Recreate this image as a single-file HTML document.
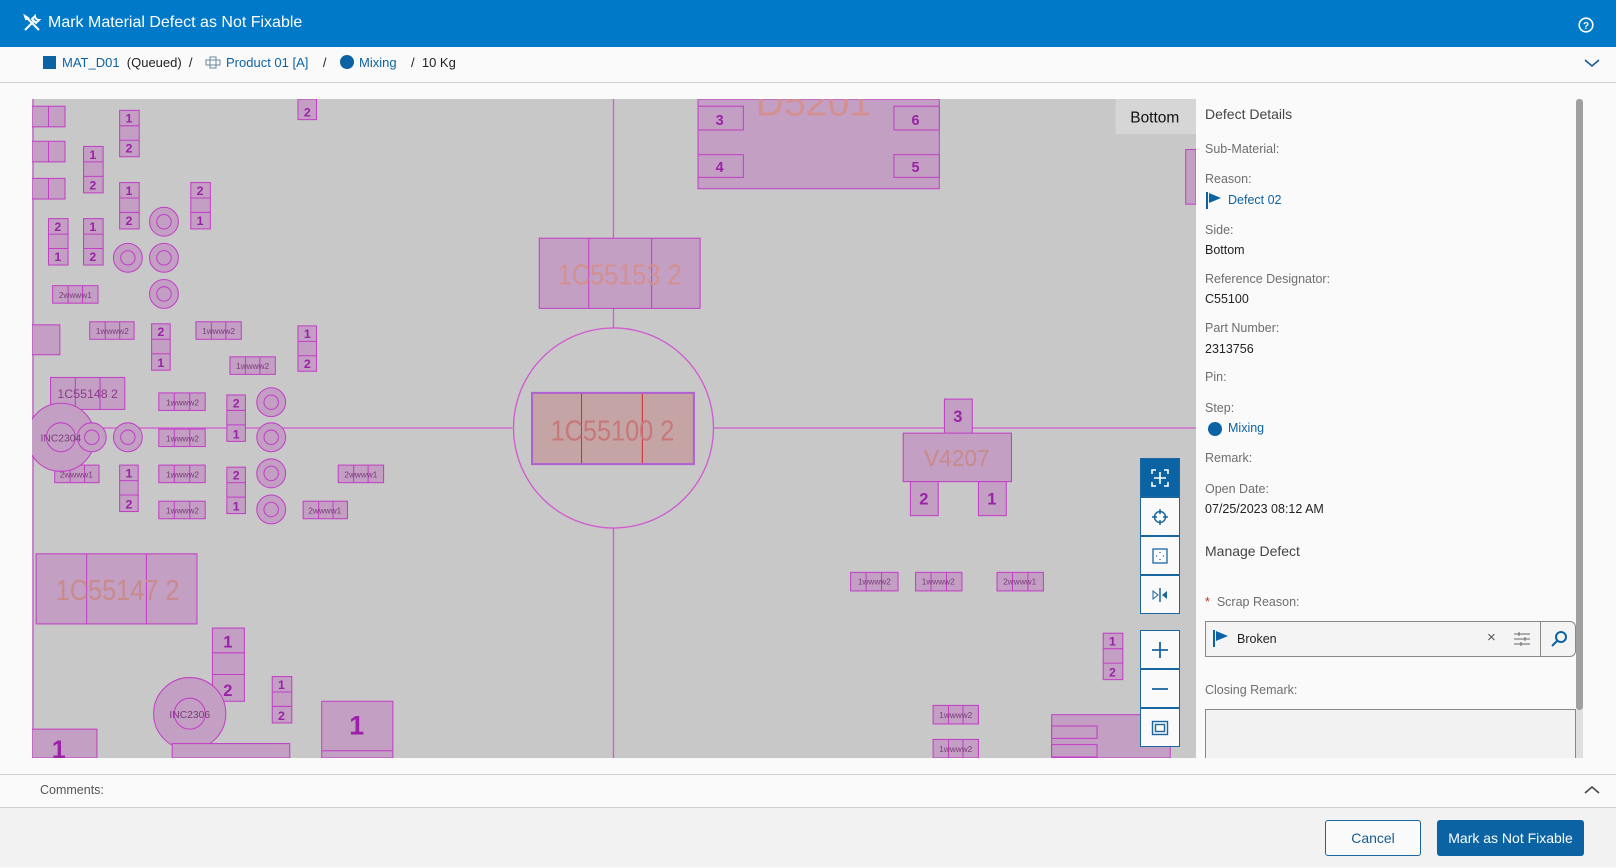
<!DOCTYPE html>
<html><head><meta charset="utf-8"><style>
*{box-sizing:border-box;margin:0;padding:0}
body{width:1616px;height:867px;overflow:hidden;background:#fafafa;font-family:"Liberation Sans",sans-serif;color:#222;position:relative}
.hdr{position:absolute;left:0;top:0;width:1616px;height:47px;background:#0079c8;color:#fff;font-size:16px}
.crumb{position:absolute;top:47px;left:0;width:1616px;height:36px;border-bottom:1px solid #d0d0d0;font-size:13px}
.abs{position:absolute}
.lbl{position:absolute;left:1205px;font-size:12.5px;color:#6e6e6e}
.val{position:absolute;left:1205px;font-size:12.5px;color:#222}
.tb{position:absolute;left:1140px;width:40px;height:39px;background:#fafafa;border:1.5px solid #1a66a0;display:flex;align-items:center;justify-content:center}
.c rect,.c circle{fill:#c39fc3;stroke:#c23fc6;stroke-width:1}
.c line{stroke:#c23fc6;stroke-width:1}
.n{fill:#9b22a8;font-weight:bold;font-family:"Liberation Sans",sans-serif}
.s{fill:#7a3a7a;font-size:5px;font-family:"Liberation Sans",sans-serif}
</style></head><body>
<div class="hdr">
<svg class="abs" style="left:23px;top:14px" width="18" height="18" viewBox="0 0 18 18" fill="none" stroke="#fff" stroke-width="2"><path d="M2 16 L11 7 M12 2a4 4 0 0 0 4 4l-3 3-4-4z" /><path d="M2 2 L16 16 M2 2l1 3 2-1z"/></svg>
<div class="abs" style="left:48px;top:14px">Mark Material Defect as Not Fixable</div>
<svg class="abs" style="left:1578px;top:17px" width="16" height="16" viewBox="0 0 16 16"><circle cx="8" cy="8" r="6.8" fill="none" stroke="#fff" stroke-width="1.6"/><text x="8" y="12" text-anchor="middle" fill="#fff" font-size="10" font-weight="bold" font-family="Liberation Sans">?</text></svg>
</div>
<div class="crumb">
<div class="abs" style="left:43px;top:9px;width:13px;height:13px;background:#0c63a4"></div>
<div class="abs" style="left:62px;top:8px;color:#0c63a4">MAT_D01 <span style="color:#222">&nbsp;(Queued) &nbsp;/</span></div>
<svg class="abs" style="left:205px;top:9px" width="16" height="13" viewBox="0 0 16 13" fill="none" stroke="#6a8aa0"><rect x="1" y="4" width="14" height="5"/><rect x="5" y="1" width="6" height="11"/></svg>
<div class="abs" style="left:226px;top:8px;color:#0c63a4">Product 01 [A] <span style="color:#222">&nbsp;&nbsp;&nbsp;/</span></div>
<div class="abs" style="left:340px;top:8px;width:14px;height:14px;border-radius:50%;background:#0c63a4"></div>
<div class="abs" style="left:359px;top:8px;color:#0c63a4">Mixing <span style="color:#222">&nbsp;&nbsp;&nbsp;/&nbsp; 10 Kg</span></div>
<svg class="abs" style="left:1584px;top:11px" width="16" height="10" viewBox="0 0 16 10"><path d="M1 2l7 6 7-6" fill="none" stroke="#1a5a90" stroke-width="1.6"/></svg>
</div>

<svg class="abs" style="left:32px;top:99px" width="1164" height="659" viewBox="32 96 1129 639" preserveAspectRatio="none">
<rect x="32" y="96" width="1129" height="639" fill="#c8c8c8"/>
<g stroke="#d05cd0" stroke-width="1.3" fill="none">
<line x1="596" y1="96" x2="596" y2="318"/><line x1="596" y1="512" x2="596" y2="735"/>
<line x1="32" y1="415" x2="498" y2="415"/><line x1="693" y1="415" x2="1161" y2="415"/>
<circle cx="596" cy="415" r="97"/>
<line x1="33" y1="96" x2="33" y2="735"/>
</g>
<g class="c">
<rect x="678" y="96" width="234" height="87"/>
<text x="790" y="112" text-anchor="middle" font-size="38" fill="#d49090" font-family="Liberation Sans">D5201</text>
<rect x="678" y="103" width="44" height="23"/><rect x="678" y="150" width="44" height="22"/><rect x="868" y="103" width="44" height="23"/><rect x="868" y="150" width="44" height="22"/>
<text class="n" x="699" y="121" font-size="14" text-anchor="middle">3</text><text class="n" x="699" y="167" font-size="14" text-anchor="middle">4</text><text class="n" x="889" y="121" font-size="14" text-anchor="middle">6</text><text class="n" x="889" y="167" font-size="14" text-anchor="middle">5</text>

<rect x="524" y="231" width="156" height="68"/><line x1="572" y1="231" x2="572" y2="299"/><line x1="633" y1="231" x2="633" y2="299"/>
<text x="602" y="276" text-anchor="middle" font-size="28" fill="#d49090" font-family="Liberation Sans" textLength="120" lengthAdjust="spacingAndGlyphs">1C55153 2</text>

<rect x="517" y="381" width="157" height="69" style="fill:#c4a4a4;stroke:#b060d0;stroke-width:2"/><line x1="565" y1="382" x2="565" y2="449" style="stroke:#d03030"/><line x1="624" y1="382" x2="624" y2="449" style="stroke:#d03030"/>
<text x="595" y="427" text-anchor="middle" font-size="28" fill="#c87878" font-family="Liberation Sans" textLength="120" lengthAdjust="spacingAndGlyphs">1C55100 2</text>

<rect x="917" y="387" width="27" height="34"/><text class="n" x="930" y="409" font-size="16" text-anchor="middle">3</text>
<rect x="877" y="420" width="105" height="47"/><text x="929" y="452" font-size="22" fill="#c88a8a" text-anchor="middle" font-family="Liberation Sans">V4207</text>
<rect x="884" y="467" width="27" height="33"/><text class="n" x="897" y="489" font-size="16" text-anchor="middle">2</text>
<rect x="950" y="467" width="27" height="33"/><text class="n" x="963" y="489" font-size="16" text-anchor="middle">1</text>

<rect x="36" y="537" width="156" height="68"/><line x1="85" y1="537" x2="85" y2="605"/><line x1="143" y1="537" x2="143" y2="605"/>
<text x="115" y="582" text-anchor="middle" font-size="28" fill="#c88a8a" font-family="Liberation Sans" textLength="120" lengthAdjust="spacingAndGlyphs">1C55147 2</text>

<rect x="50" y="366" width="72" height="31"/><line x1="74" y1="366" x2="74" y2="397"/><line x1="98" y1="366" x2="98" y2="397"/><text x="86" y="386" font-size="12" fill="#8a3a8a" text-anchor="middle" font-family="Liberation Sans">1C55148 2</text>

<!-- small horizontals -->
<g>
<rect x="32" y="103" width="32" height="20"/><line x1="48" y1="103" x2="48" y2="123"/>
<rect x="32" y="137" width="32" height="20"/><line x1="48" y1="137" x2="48" y2="157"/>
<rect x="32" y="173" width="32" height="20"/><line x1="48" y1="173" x2="48" y2="193"/>
<rect x="52" y="277" width="44" height="17"/><line x1="67" y1="277" x2="67" y2="294"/><line x1="81" y1="277" x2="81" y2="294"/>
<rect x="88" y="312" width="43" height="17"/><line x1="103" y1="312" x2="103" y2="329"/><line x1="117" y1="312" x2="117" y2="329"/>
<rect x="191" y="312" width="44" height="17"/><line x1="206" y1="312" x2="206" y2="329"/><line x1="220" y1="312" x2="220" y2="329"/>
<rect x="224" y="346" width="44" height="17"/><line x1="239" y1="346" x2="239" y2="363"/><line x1="253" y1="346" x2="253" y2="363"/>
<rect x="155" y="381" width="45" height="17"/><line x1="170" y1="381" x2="170" y2="398"/><line x1="185" y1="381" x2="185" y2="398"/>
<rect x="155" y="416" width="45" height="17"/><line x1="170" y1="416" x2="170" y2="433"/><line x1="185" y1="416" x2="185" y2="433"/>
<rect x="155" y="451" width="45" height="17"/><line x1="170" y1="451" x2="170" y2="468"/><line x1="185" y1="451" x2="185" y2="468"/>
<rect x="155" y="486" width="45" height="17"/><line x1="170" y1="486" x2="170" y2="503"/><line x1="185" y1="486" x2="185" y2="503"/>
<rect x="295" y="486" width="43" height="17"/><line x1="310" y1="486" x2="310" y2="503"/><line x1="324" y1="486" x2="324" y2="503"/>
<rect x="329" y="451" width="44" height="17"/><line x1="344" y1="451" x2="344" y2="468"/><line x1="358" y1="451" x2="358" y2="468"/>
<rect x="54" y="451" width="43" height="17"/><line x1="69" y1="451" x2="69" y2="468"/><line x1="83" y1="451" x2="83" y2="468"/>
<rect x="826" y="555" width="46" height="18"/><line x1="841" y1="555" x2="841" y2="573"/><line x1="856" y1="555" x2="856" y2="573"/>
<rect x="889" y="555" width="45" height="18"/><line x1="904" y1="555" x2="904" y2="573"/><line x1="919" y1="555" x2="919" y2="573"/>
<rect x="968" y="555" width="45" height="18"/><line x1="983" y1="555" x2="983" y2="573"/><line x1="998" y1="555" x2="998" y2="573"/>
<rect x="906" y="684" width="44" height="18"/><line x1="921" y1="684" x2="921" y2="702"/><line x1="935" y1="684" x2="935" y2="702"/>
<rect x="906" y="717" width="44" height="18"/><line x1="921" y1="717" x2="921" y2="735"/><line x1="935" y1="717" x2="935" y2="735"/>
<rect x="32" y="315" width="27" height="29"/>
</g>
<g font-size="8" fill="#7a3a7a" font-family="Liberation Sans" text-anchor="middle">
<text x="74" y="289">2wwww1</text><text x="110" y="324">1wwww2</text><text x="213" y="324">1wwww2</text><text x="246" y="358">1wwww2</text><text x="178" y="393">1wwww2</text><text x="178" y="428">1wwww2</text><text x="178" y="463">1wwww2</text><text x="178" y="498">1wwww2</text><text x="316" y="498">2wwww1</text><text x="351" y="463">2wwww1</text><text x="75" y="463">2wwww1</text><text x="849" y="567">1wwww2</text><text x="911" y="567">1wwww2</text><text x="990" y="567">2wwww1</text><text x="928" y="696">1wwww2</text><text x="928" y="729">1wwww2</text>
</g>
<!-- verticals -->
<g>
<rect x="117" y="107" width="19" height="45"/><line x1="117" y1="122" x2="136" y2="122"/><line x1="117" y1="136" x2="136" y2="136"/>
<rect x="82" y="142" width="19" height="45"/><line x1="82" y1="157" x2="101" y2="157"/><line x1="82" y1="171" x2="101" y2="171"/>
<rect x="117" y="177" width="19" height="45"/><line x1="117" y1="192" x2="136" y2="192"/><line x1="117" y1="206" x2="136" y2="206"/>
<rect x="186" y="177" width="19" height="45"/><line x1="186" y1="192" x2="205" y2="192"/><line x1="186" y1="206" x2="205" y2="206"/>
<rect x="48" y="212" width="19" height="45"/><line x1="48" y1="227" x2="67" y2="227"/><line x1="48" y1="241" x2="67" y2="241"/>
<rect x="82" y="212" width="19" height="45"/><line x1="82" y1="227" x2="101" y2="227"/><line x1="82" y1="241" x2="101" y2="241"/>
<rect x="148" y="314" width="18" height="45"/><line x1="148" y1="329" x2="166" y2="329"/><line x1="148" y1="343" x2="166" y2="343"/>
<rect x="290" y="316" width="18" height="44"/><line x1="290" y1="331" x2="308" y2="331"/><line x1="290" y1="345" x2="308" y2="345"/>
<rect x="221" y="383" width="18" height="45"/><line x1="221" y1="398" x2="239" y2="398"/><line x1="221" y1="412" x2="239" y2="412"/>
<rect x="221" y="453" width="18" height="45"/><line x1="221" y1="468" x2="239" y2="468"/><line x1="221" y1="482" x2="239" y2="482"/>
<rect x="117" y="451" width="18" height="45"/><line x1="117" y1="466" x2="135" y2="466"/><line x1="117" y1="480" x2="135" y2="480"/>
<rect x="265" y="656" width="19" height="45"/><line x1="265" y1="671" x2="284" y2="671"/><line x1="265" y1="685" x2="284" y2="685"/>
<rect x="1071" y="614" width="19" height="45"/><line x1="1071" y1="629" x2="1090" y2="629"/><line x1="1071" y1="643" x2="1090" y2="643"/>
<rect x="290" y="96" width="18" height="20"/>
<rect x="207" y="609" width="31" height="71"/><line x1="207" y1="633" x2="238" y2="633"/><line x1="207" y1="654" x2="238" y2="654"/>
</g>
<g class="n" font-size="12" text-anchor="middle">
<text x="126" y="119">1</text><text x="126" y="148">2</text><text x="91" y="154">1</text><text x="91" y="184">2</text><text x="126" y="189">1</text><text x="126" y="218">2</text><text x="195" y="189">2</text><text x="195" y="218">1</text><text x="57" y="224">2</text><text x="57" y="253">1</text><text x="91" y="224">1</text><text x="91" y="253">2</text><text x="157" y="326">2</text><text x="157" y="356">1</text><text x="299" y="328">1</text><text x="299" y="357">2</text><text x="230" y="395">2</text><text x="230" y="425">1</text><text x="230" y="465">2</text><text x="230" y="495">1</text><text x="126" y="463">1</text><text x="126" y="493">2</text><text x="274" y="668">1</text><text x="274" y="698">2</text><text x="1080" y="626">1</text><text x="1080" y="656">2</text><text x="299" y="113">2</text>
<text x="222" y="628" font-size="16">1</text><text x="222" y="675" font-size="16">2</text>
</g>
<!-- circles -->
<g>
<circle cx="60" cy="424" r="33"/><circle cx="185" cy="692" r="35"/><circle cx="185" cy="692" r="15"/>
<circle cx="160" cy="215" r="14"/><circle cx="160" cy="215" r="7"/>
<circle cx="125" cy="250" r="14"/><circle cx="125" cy="250" r="7"/>
<circle cx="160" cy="250" r="14"/><circle cx="160" cy="250" r="7"/>
<circle cx="160" cy="285" r="14"/><circle cx="160" cy="285" r="7"/>
<circle cx="264" cy="390" r="14"/><circle cx="264" cy="390" r="7"/>
<circle cx="264" cy="424" r="14"/><circle cx="264" cy="424" r="7"/>
<circle cx="264" cy="459" r="14"/><circle cx="264" cy="459" r="7"/>
<circle cx="264" cy="494" r="14"/><circle cx="264" cy="494" r="7"/>
<circle cx="125" cy="424" r="14"/><circle cx="125" cy="424" r="7"/>
<circle cx="90" cy="424" r="14"/><circle cx="90" cy="424" r="7"/>
<circle cx="60" cy="424" r="14"/>
</g>
<text x="60" y="428" font-size="10" fill="#7a3a7a" text-anchor="middle" font-family="Liberation Sans">INC2304</text>
<text x="185" y="696" font-size="10" fill="#7a3a7a" text-anchor="middle" font-family="Liberation Sans">INC2306</text>
<rect x="313" y="680" width="69" height="55"/><line x1="313" y1="728" x2="382" y2="728"/><text class="n" x="347" y="712" font-size="26" text-anchor="middle">1</text>
<rect x="32" y="707" width="63" height="28"/><text class="n" x="58" y="735" font-size="24" text-anchor="middle">1</text>
<rect x="168" y="721" width="114" height="14"/>
<rect x="1021" y="693" width="115" height="42"/><rect x="1021" y="704" width="44" height="12"/><rect x="1021" y="722" width="44" height="12"/>
<rect x="1151" y="145" width="10" height="53"/>
</g>
<rect x="1083" y="96" width="78" height="34" fill="#d6d6d6"/>
<text x="1121" y="119" font-size="15" fill="#111" text-anchor="middle" font-family="Liberation Sans">Bottom</text>
</svg>

<div class="tb" style="top:458px;background:#0c63a4"><svg width="18" height="18" viewBox="0 0 18 18" fill="none" stroke="#fff" stroke-width="1.6"><path d="M1 5V1h4M13 1h4v4M17 13v4h-4M5 17H1v-4M9 3v12M3 9h12"/></svg></div>
<div class="tb" style="top:497px"><svg width="18" height="18" viewBox="0 0 18 18" fill="none" stroke="#1a66a0" stroke-width="1.5"><circle cx="9" cy="9" r="5.5"/><path d="M9 1v5M9 12v5M1 9h5M12 9h5"/></svg></div>
<div class="tb" style="top:536px"><svg width="18" height="18" viewBox="0 0 18 18" fill="none" stroke="#1a66a0" stroke-width="1.3"><rect x="2" y="2" width="14" height="14"/><path d="M9 5v1M9 12v1M5 9h1M12 9h1"/></svg></div>
<div class="tb" style="top:575px"><svg width="18" height="18" viewBox="0 0 18 18"><path d="M2 5l5 4-5 4z" fill="none" stroke="#1a66a0"/><path d="M9 2v14" stroke="#1a66a0" stroke-width="1.5"/><path d="M16 5l-5 4 5 4z" fill="#1a66a0"/></svg></div>
<div class="tb" style="top:630px"><svg width="20" height="20" viewBox="0 0 20 20" stroke="#1a66a0" stroke-width="1.8"><path d="M10 2v16M2 10h16"/></svg></div>
<div class="tb" style="top:669px"><svg width="20" height="20" viewBox="0 0 20 20" stroke="#1a66a0" stroke-width="1.8"><path d="M2 10h16"/></svg></div>
<div class="tb" style="top:708px"><svg width="18" height="18" viewBox="0 0 18 18" fill="none" stroke="#1a66a0" stroke-width="1.4"><rect x="1.5" y="2.5" width="15" height="13"/><rect x="4.5" y="5.5" width="9" height="7"/></svg></div>

<div class="abs" style="left:1196px;top:99px;width:387px;height:659px;background:#fafafa"></div>
<div class="abs" style="left:1576px;top:99px;width:7px;height:611px;background:#a0a0a0;border-radius:3px"></div>
<div class="abs" style="left:1576px;top:710px;width:7px;height:48px;background:#e0e0e0"></div>
<div class="val" style="top:106px;font-size:14px;color:#444">Defect Details</div>
<div class="lbl" style="top:142px">Sub-Material:</div>
<div class="lbl" style="top:172px">Reason:</div>
<svg class="abs" style="left:1206px;top:192px" width="16" height="17" viewBox="0 0 16 17"><rect x="0" y="0" width="2" height="17" fill="#0c63a4"/><path d="M3 1l12 5-12 5z" fill="#0c63a4"/></svg>
<div class="val" style="top:193px;left:1228px;color:#0c63a4">Defect 02</div>
<div class="lbl" style="top:223px">Side:</div>
<div class="val" style="top:243px">Bottom</div>
<div class="lbl" style="top:272px">Reference Designator:</div>
<div class="val" style="top:292px">C55100</div>
<div class="lbl" style="top:321px">Part Number:</div>
<div class="val" style="top:342px">2313756</div>
<div class="lbl" style="top:370px">Pin:</div>
<div class="lbl" style="top:401px">Step:</div>
<div class="abs" style="left:1208px;top:422px;width:14px;height:14px;border-radius:50%;background:#0c63a4"></div>
<div class="val" style="top:421px;left:1228px;color:#0c63a4">Mixing</div>
<div class="lbl" style="top:451px">Remark:</div>
<div class="lbl" style="top:482px">Open Date:</div>
<div class="val" style="top:502px">07/25/2023 08:12 AM</div>
<div class="val" style="top:543px;font-size:14px;color:#444">Manage Defect</div>
<div class="lbl" style="top:595px"><span style="color:#c03030">*</span>&nbsp; Scrap Reason:</div>
<div class="abs" style="left:1205px;top:621px;width:371px;height:36px;border:1px solid #888;border-radius:0 6px 6px 0;background:#f4f4f4"></div>
<div class="abs" style="left:1540px;top:621px;width:1px;height:36px;background:#888"></div>
<svg class="abs" style="left:1213px;top:630px" width="16" height="17" viewBox="0 0 16 17"><rect x="0" y="0" width="2" height="17" fill="#0c63a4"/><path d="M3 1l12 5-12 5z" fill="#0c63a4"/></svg>
<div class="val" style="top:632px;left:1237px">Broken</div>
<div class="abs" style="left:1487px;top:629px;font-size:15px;color:#555">×</div>
<svg class="abs" style="left:1513px;top:631px" width="18" height="16" viewBox="0 0 18 16" stroke="#666" stroke-width="1"><path d="M1 3h16M1 8h16M1 13h16M6 1v4M12 6v4M8 11v4"/></svg>
<svg class="abs" style="left:1550px;top:630px" width="18" height="18" viewBox="0 0 18 18" fill="none" stroke="#0c63a4" stroke-width="2"><circle cx="11" cy="7" r="5"/><path d="M7.5 10.5L2 16"/></svg>
<div class="lbl" style="top:683px">Closing Remark:</div>
<div class="abs" style="left:1205px;top:709px;width:371px;height:55px;border:1px solid #888;background:#f2f2f2"></div>
<div class="abs" style="left:0;top:758px;width:1616px;height:110px;background:#fafafa"></div>
<div class="abs" style="left:0;top:774px;width:1616px;height:1px;background:#d0d0d0"></div>
<div class="abs" style="left:40px;top:783px;font-size:12.5px;color:#555">Comments:</div>
<svg class="abs" style="left:1584px;top:785px" width="16" height="10" viewBox="0 0 16 10"><path d="M1 8l7-6 7 6" fill="none" stroke="#444" stroke-width="1.5"/></svg>
<div class="abs" style="left:0;top:807px;width:1616px;height:60px;background:#f2f2f2;border-top:1px solid #d0d0d0"></div>
<div class="abs" style="left:1325px;top:820px;width:96px;height:36px;border:1px solid #1a66a0;border-radius:3px;color:#1a5a90;font-size:14px;text-align:center;line-height:34px;background:#fafafa">Cancel</div>
<div class="abs" style="left:1437px;top:820px;width:147px;height:36px;border-radius:3px;background:#0c63a4;color:#fff;font-size:14px;text-align:center;line-height:36px">Mark as Not Fixable</div>
</body></html>
